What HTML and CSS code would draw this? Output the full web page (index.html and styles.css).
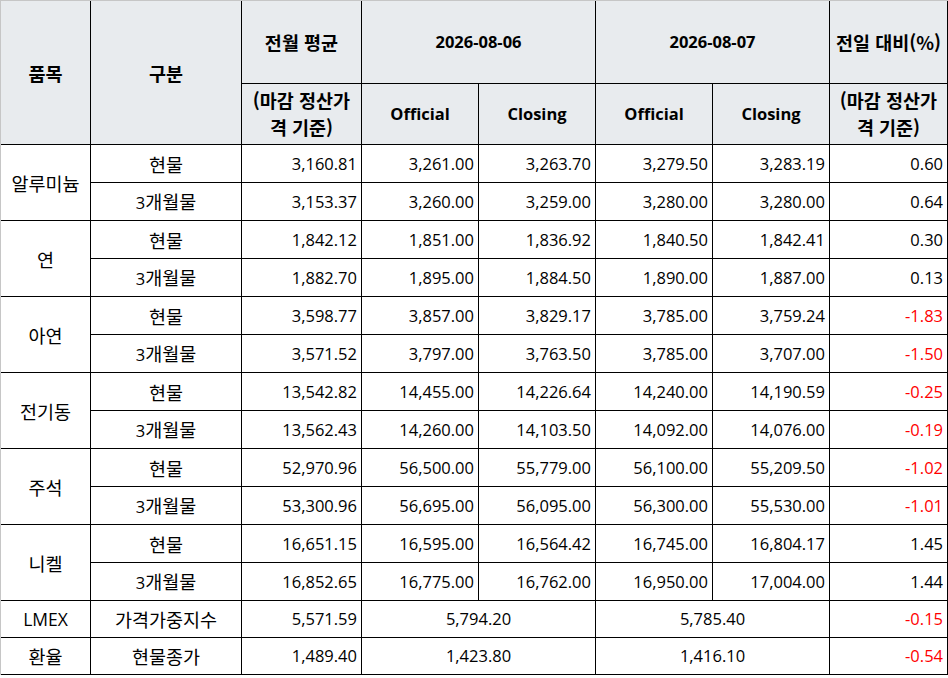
FILE: index.html
```html
<!DOCTYPE html>
<html lang="ko">
<head>
<meta charset="utf-8">
<title>LME 가격</title>
<link rel="stylesheet" href="styles.css">
</head>
<body>
<table class="price-table">
  <colgroup>
    <col class="c-item">
    <col class="c-type">
    <col class="c-avg">
    <col class="c-val">
    <col class="c-val">
    <col class="c-val">
    <col class="c-val">
    <col class="c-diff">
  </colgroup>
  <thead>
    <tr class="hr1">
      <th rowspan="2" class="ko">품목</th>
      <th rowspan="2" class="ko">구분</th>
      <th class="ko">전월 평균</th>
      <th colspan="2">2026-08-06</th>
      <th colspan="2">2026-08-07</th>
      <th class="ko">전일 대비(%)</th>
    </tr>
    <tr class="hr2">
      <th class="ko wrap">(마감 정산가<br>격 기준)</th>
      <th>Official</th>
      <th>Closing</th>
      <th>Official</th>
      <th>Closing</th>
      <th class="ko wrap">(마감 정산가<br>격 기준)</th>
    </tr>
  </thead>
  <tbody>
    <tr><td rowspan="2" class="ctr ko">알루미늄</td><td class="ctr ko">현물</td><td class="num">3,160.81</td><td class="num">3,261.00</td><td class="num">3,263.70</td><td class="num">3,279.50</td><td class="num">3,283.19</td><td class="num">0.60</td></tr>
    <tr><td class="ctr ko"><span class="lat">3</span>개월물</td><td class="num">3,153.37</td><td class="num">3,260.00</td><td class="num">3,259.00</td><td class="num">3,280.00</td><td class="num">3,280.00</td><td class="num">0.64</td></tr>
    <tr><td rowspan="2" class="ctr ko">연</td><td class="ctr ko">현물</td><td class="num">1,842.12</td><td class="num">1,851.00</td><td class="num">1,836.92</td><td class="num">1,840.50</td><td class="num">1,842.41</td><td class="num">0.30</td></tr>
    <tr><td class="ctr ko"><span class="lat">3</span>개월물</td><td class="num">1,882.70</td><td class="num">1,895.00</td><td class="num">1,884.50</td><td class="num">1,890.00</td><td class="num">1,887.00</td><td class="num">0.13</td></tr>
    <tr><td rowspan="2" class="ctr ko">아연</td><td class="ctr ko">현물</td><td class="num">3,598.77</td><td class="num">3,857.00</td><td class="num">3,829.17</td><td class="num">3,785.00</td><td class="num">3,759.24</td><td class="num neg">-1.83</td></tr>
    <tr><td class="ctr ko"><span class="lat">3</span>개월물</td><td class="num">3,571.52</td><td class="num">3,797.00</td><td class="num">3,763.50</td><td class="num">3,785.00</td><td class="num">3,707.00</td><td class="num neg">-1.50</td></tr>
    <tr><td rowspan="2" class="ctr ko">전기동</td><td class="ctr ko">현물</td><td class="num">13,542.82</td><td class="num">14,455.00</td><td class="num">14,226.64</td><td class="num">14,240.00</td><td class="num">14,190.59</td><td class="num neg">-0.25</td></tr>
    <tr><td class="ctr ko"><span class="lat">3</span>개월물</td><td class="num">13,562.43</td><td class="num">14,260.00</td><td class="num">14,103.50</td><td class="num">14,092.00</td><td class="num">14,076.00</td><td class="num neg">-0.19</td></tr>
    <tr><td rowspan="2" class="ctr ko">주석</td><td class="ctr ko">현물</td><td class="num">52,970.96</td><td class="num">56,500.00</td><td class="num">55,779.00</td><td class="num">56,100.00</td><td class="num">55,209.50</td><td class="num neg">-1.02</td></tr>
    <tr><td class="ctr ko"><span class="lat">3</span>개월물</td><td class="num">53,300.96</td><td class="num">56,695.00</td><td class="num">56,095.00</td><td class="num">56,300.00</td><td class="num">55,530.00</td><td class="num neg">-1.01</td></tr>
    <tr><td rowspan="2" class="ctr ko">니켈</td><td class="ctr ko">현물</td><td class="num">16,651.15</td><td class="num">16,595.00</td><td class="num">16,564.42</td><td class="num">16,745.00</td><td class="num">16,804.17</td><td class="num">1.45</td></tr>
    <tr><td class="ctr ko"><span class="lat">3</span>개월물</td><td class="num">16,852.65</td><td class="num">16,775.00</td><td class="num">16,762.00</td><td class="num">16,950.00</td><td class="num">17,004.00</td><td class="num">1.44</td></tr>
    <tr class="short"><td class="ctr caps">LMEX</td><td class="ctr ko">가격가중지수</td><td class="num">5,571.59</td><td colspan="2" class="ctr">5,794.20</td><td colspan="2" class="ctr">5,785.40</td><td class="num neg">-0.15</td></tr>
    <tr class="short"><td class="ctr ko">환율</td><td class="ctr ko">현물종가</td><td class="num">1,489.40</td><td colspan="2" class="ctr">1,423.80</td><td colspan="2" class="ctr">1,416.10</td><td class="num neg">-0.54</td></tr>
  </tbody>
</table>
</body>
</html>
```

FILE: styles.css
```css
html, body {
  margin: 0;
  padding: 0;
  background: #ffffff;
}

.price-table {
  width: 948px;
  table-layout: fixed;
  border-collapse: separate;
  border-spacing: 0;
  border-left: 1px solid #c6c6c6;
  border-top: 1px solid #c6c6c6;
  font-family: "Open Sans", "Noto Sans CJK KR", sans-serif;
  font-size: 16.5px;
  color: #000000;
}

.c-item { width: 90px; }
.c-type { width: 151px; }
.c-avg { width: 120px; }
.c-val { width: 117px; }
.c-diff { width: 118px; }

.price-table th,
.price-table td {
  box-sizing: border-box;
  border-right: 1px solid #000000;
  border-bottom: 1px solid #000000;
  padding: 0 4px;
  white-space: nowrap;
  vertical-align: middle;
  line-height: 22px;
}

.price-table th {
  background: #e8ebee;
  font-weight: 700;
  text-align: center;
}

.price-table .ko {
  font-family: "Noto Sans CJK KR", "Open Sans", sans-serif;
  font-size: 18.5px;
}

.price-table .ko .lat {
  font-family: "Open Sans", sans-serif;
  font-size: 16.5px;
}

.price-table .caps {
  font-size: 17.5px;
}

.price-table th.wrap {
  line-height: 27px;
}

.hr1 { height: 83px; }
.hr2 { height: 61px; }
.price-table tbody tr { height: 38px; }
.price-table tbody tr.short { height: 37px; }

.ctr { text-align: center; }
.num { text-align: right; }
.neg { color: #ff0000; }
```
